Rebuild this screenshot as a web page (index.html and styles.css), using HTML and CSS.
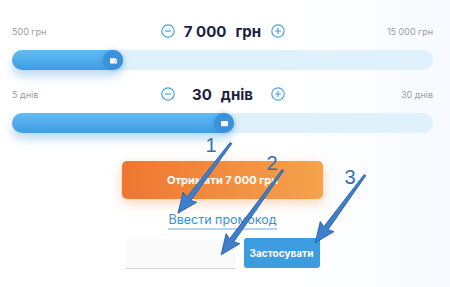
FILE: index.html
```html
<!DOCTYPE html>
<html lang="uk">
<head>
<meta charset="utf-8">
<title>Калькулятор</title>
<link rel="stylesheet" href="styles.css">
</head>
<body>
<div class="page">
  <div class="calc">
    <div class="range">
      <div class="range-head">
        <span class="lim">500 грн</span>
        <div class="value">
          <span class="step"><svg viewBox="0 0 14 14" width="14" height="14"><circle cx="7" cy="7" r="6.2"/><path d="M4 7h6"/></svg></span>
          <span class="amount"><span class="num">7 000</span><span class="unit">грн</span></span>
          <span class="step"><svg viewBox="0 0 14 14" width="14" height="14"><circle cx="7" cy="7" r="6.2"/><path d="M4 7h6M7 4v6"/></svg></span>
        </div>
        <span class="lim lim-r">15 000 грн</span>
      </div>
      <div class="track">
        <div class="fill" style="width:111px">
          <span class="thumb"><svg viewBox="0 0 10 8" width="9" height="7"><path d="M1 1.5h6.5v1H9v5H1z" fill="#fff"/><rect x="6.2" y="4" width="1.6" height="1.4" fill="#4a9fe2"/></svg></span>
        </div>
      </div>
    </div>

    <div class="range range-2">
      <div class="range-head">
        <span class="lim">5 днів</span>
        <div class="value">
          <span class="step"><svg viewBox="0 0 14 14" width="14" height="14"><circle cx="7" cy="7" r="6.2"/><path d="M4 7h6"/></svg></span>
          <span class="amount"><span class="num">30</span><span class="unit">днів</span></span>
          <span class="step"><svg viewBox="0 0 14 14" width="14" height="14"><circle cx="7" cy="7" r="6.2"/><path d="M4 7h6M7 4v6"/></svg></span>
        </div>
        <span class="lim lim-r">30 днів</span>
      </div>
      <div class="track">
        <div class="fill" style="width:222px">
          <span class="thumb"><svg viewBox="0 0 10 8" width="9" height="7"><rect x="1" y="1" width="8" height="6" rx="1" fill="#fff"/></svg></span>
        </div>
      </div>
    </div>

    <div class="actions">
      <button class="cta">Отримати 7 000 грн</button>
      <a class="promo" href="#">Ввести промокод</a>
      <div class="promo-form">
        <input class="promo-input" type="text">
        <button class="apply">Застосувати</button>
      </div>
    </div>
  </div>

  <svg class="notes" viewBox="0 0 450 287" width="450" height="287">
    <g class="arrow" transform="translate(231 143) rotate(127.1)">
      <polygon points="0,-1 70,-2.6 68,-8.5 88,0 68,8.5 70,2.6 0,1"/>
    </g>
    <g class="arrow" transform="translate(283 170) rotate(126.1)">
      <polygon points="0,-1 87,-2.6 85,-8.5 105,0 85,8.5 87,2.6 0,1"/>
    </g>
    <g class="arrow" transform="translate(365 175) rotate(126.3)">
      <polygon points="0,-1 66,-2.6 64,-8.5 84,0 64,8.5 66,2.6 0,1"/>
    </g>
    <text class="note-num" x="211" y="152" text-anchor="middle">1</text>
    <text class="note-num" x="272" y="170" text-anchor="middle">2</text>
    <text class="note-num" x="350" y="184" text-anchor="middle">3</text>
  </svg>
</div>
</body>
</html>
```

FILE: styles.css
```css
* { box-sizing: border-box; }

html, body {
  margin: 0;
  padding: 0;
}

body {
  width: 450px;
  height: 287px;
  overflow: hidden;
  background: linear-gradient(90deg, #ffffff 62%, #f6fafe 100%);
  font-family: "Inter", "Open Sans", sans-serif;
}

.page {
  position: relative;
  width: 450px;
  height: 287px;
}

.calc {
  padding: 20px 17px 0 12px;
}

.range-head {
  display: grid;
  grid-template-columns: 1fr auto 1fr;
  align-items: center;
  height: 22px;
}

.lim {
  font-size: 9px;
  color: #9c9ca5;
}

.lim-r {
  text-align: right;
}

.value {
  display: flex;
  align-items: center;
}

.amount {
  width: 96px;
  display: flex;
  justify-content: center;
  gap: 9px;
}

.step {
  display: flex;
  width: 14px;
  height: 14px;
}

.step svg {
  fill: none;
  stroke: #4aa3e6;
  stroke-width: 1.2;
}

.num, .unit {
  font-size: 15px;
  font-weight: 700;
  color: #1d1d3f;
}

.track {
  margin-top: 8px;
  height: 20px;
  border-radius: 10px;
  background: #dff1fc;
}

.fill {
  height: 20px;
  border-radius: 10px;
  background: linear-gradient(180deg, #62bbf2 0%, #3f9ce3 100%);
  box-shadow: 0 6px 10px rgba(62, 150, 225, 0.35);
  display: flex;
  justify-content: flex-end;
}

.thumb {
  width: 20px;
  height: 20px;
  border-radius: 50%;
  background: #3b92db;
  box-shadow: 0 0 4px rgba(40, 110, 190, 0.35);
  display: flex;
  align-items: center;
  justify-content: center;
}

.range-2 {
  margin-top: 13px;
}

.actions {
  display: flex;
  flex-direction: column;
  align-items: center;
}

.cta {
  margin-top: 28px;
  width: 201px;
  height: 38px;
  border: 0;
  border-radius: 5px;
  background: linear-gradient(90deg, #ef7632 0%, #f5a34c 100%);
  box-shadow: 0 4px 12px rgba(240, 130, 50, 0.35);
  color: #fff;
  font-family: "Inter", "Open Sans", sans-serif;
  font-size: 11px;
  font-weight: 700;
}

.promo {
  margin-top: 13px;
  font-size: 12.5px;
  line-height: 16px;
  color: #3a8fd6;
  text-decoration: none;
  border-bottom: 2px solid #b3d4f1;
}

.promo-form {
  margin-top: 8px;
  display: flex;
  gap: 8px;
}

.promo-input {
  width: 110px;
  height: 30px;
  border: 0;
  border-bottom: 1px solid #d3d6de;
  background: #fafafa;
  margin-top: 1px;
}

.apply {
  width: 76px;
  height: 30px;
  border: 0;
  border-radius: 3px;
  background: #3d9be0;
  color: #fff;
  font-family: "Inter", "Open Sans", sans-serif;
  font-size: 10px;
  font-weight: 700;
}

.notes {
  position: absolute;
  left: 0;
  top: 0;
  pointer-events: none;
}

.arrow polygon {
  fill: #3e7ecb;
  stroke: #2b5e9f;
  stroke-width: 0.8;
  stroke-linejoin: round;
}

.note-num {
  font-family: "Liberation Sans", sans-serif;
  font-size: 20px;
  fill: #3170b8;
}
```
